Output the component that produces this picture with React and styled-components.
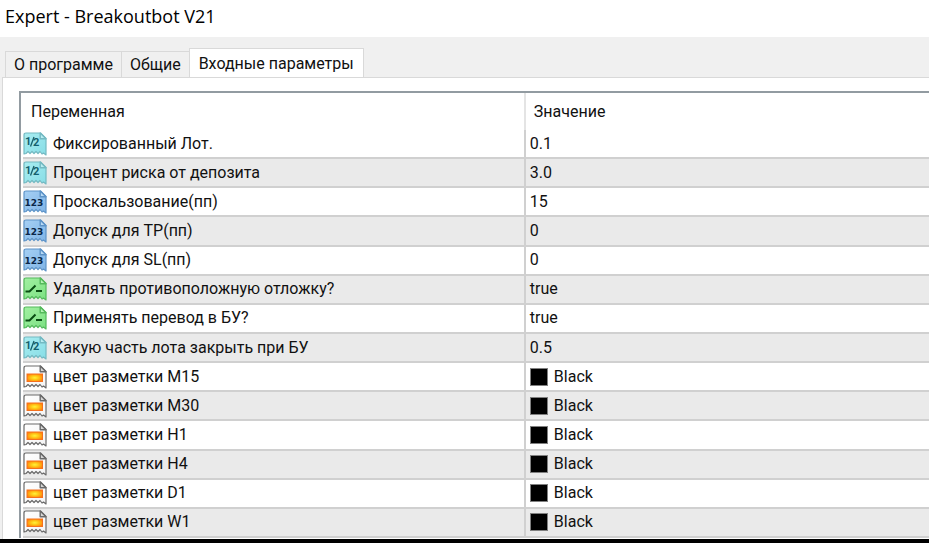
import React, { useState } from 'react';
import styled, { createGlobalStyle } from 'styled-components';

const GlobalStyle = createGlobalStyle`
	* {
		box-sizing: border-box;
	}
	body {
		margin: 0;
		background: #f0f0f0;
		color: #111;
		font-family: Roboto, "Liberation Sans", sans-serif;
		font-size: 16px;
	}
`;

const Window = styled.main`
	display: flex;
	flex-direction: column;
	height: 100vh;
	overflow: hidden;
	border-bottom: 4px solid #000;
`;

const Title = styled.h1`
	flex: none;
	margin: 0;
	padding: 4px 5px 9px;
	background: #fff;
	color: #000;
	font-family: "Open Sans", "Noto Sans", sans-serif;
	font-size: 18px;
	font-weight: 400;
	line-height: 24px;
`;

const Tabs = styled.div`
	display: flex;
	flex: none;
	align-items: flex-end;
	height: 40px;
	padding-left: 5px;
`;

const Tab = styled.button`
	height: ${props => (props.$active ? 30 : 26)}px;
	margin: 0 0 ${props => (props.$active ? -1 : 0)}px;
	padding: 0 ${props => (props.$active ? 9 : 8)}px;
	border: 1px solid #d9d9d9;
	border-bottom: 0;
	border-right-width: ${props => (props.$active ? 1 : 0)}px;
	background: ${props => (props.$active ? '#fff' : '#f0f0f0')};
	color: inherit;
	font: inherit;
	line-height: 26px;
	white-space: nowrap;
`;

const Panel = styled.section`
	flex: 1;
	min-height: 0;
	margin-left: 2px;
	padding: 13px 0 1px 16px;
	border: solid #d9d9d9;
	border-width: 1px 0 0 1px;
	background: #fff;
	overflow: hidden;
`;

const Frame = styled.div`
	height: 100%;
	padding-left: 2px;
	border: solid #929ba1;
	border-width: 2px 0 0 2px;
`;

const Table = styled.table`
	width: 100%;
	height: 100%;
	border-collapse: separate;
	border-spacing: 0;
	table-layout: fixed;
`;

const HeadCell = styled.th`
	width: ${props => props.$width || 'auto'};
	height: 37px;
	padding: 0 8px;
	border-right: ${props => (props.$width ? '2px solid #e4e4e4' : '0')};
	font-weight: 400;
	text-align: left;
`;

const Row = styled.tr`
	background: #fff;
	&:nth-child(even) {
		background: #eaeaea;
	}
`;

const Cell = styled.td`
	height: 29px;
	padding: 0 4px 0 ${props => (props.$name ? 0 : 4)}px;
	border-bottom: 2px solid #d0d0d0;
	border-right: ${props => (props.$name ? '2px solid #d0d0d0' : '0')};
	line-height: 20px;
	white-space: nowrap;
`;

const Entry = styled.div`
	display: flex;
	align-items: center;
	gap: 6px;
	height: 27px;
`;

const Swatch = styled.span`
	width: 18px;
	height: 18px;
	border: 1px solid #808080;
	background: ${props => props.$color};
`;

const Icon = styled.svg`
	flex: none;
	width: 24px;
	height: 24px;
`;

const looks = {
	double: { fill: '#86dde6', light: '#a9edf1', edge: '#74b9c2', fold: '#b8eef2', ink: '#14606e' },
	int: { fill: '#7fb4e6', light: '#a6d0f4', edge: '#5e94c8', fold: '#b9dbf6', ink: '#0a2748' },
	bool: { fill: '#7be182', light: '#a2f0a2', edge: '#54b95c', fold: '#b4f4b4', ink: '#094d12' },
	color: { fill: '#f4f4f4', light: '#fff', edge: '#6a6a6a', fold: '#d6d6d6', ink: '#606060' }
};

// torn sheet of paper with a folded corner, the mark inside depends on the type
const TypeIcon = ({ type }) => {
	const { fill, light, edge, fold, ink } = looks[type];
	return (
		<Icon viewBox="0 0 24 24" aria-hidden="true">
			<defs>
				<linearGradient id={`sheet-${type}`} x1="0" y1="0" x2="1" y2="1">
					<stop offset="0" stopColor={light} />
					<stop offset="1" stopColor={fill} />
				</linearGradient>
				<radialGradient id="glow" cx="0.5" cy="0.5" r="0.6">
					<stop offset="0" stopColor="#fff23a" />
					<stop offset="0.45" stopColor="#ffc414" />
					<stop offset="1" stopColor="#ff7a0c" />
				</radialGradient>
			</defs>
			<path
				d="M3 1H17.5L23 6.5V23L20.5 21L19 22L17 19.5L15 21.5L13 19.5L11 21.5L9 19.5L7 21.5L5 19.5L3 21.5L1 22V3Q1 1 3 1Z"
				fill={`url(#sheet-${type})`}
				stroke={edge}
				strokeWidth="1.2"
				strokeLinejoin="round"
			/>
			<path d="M17.2 1V6.8H23Z" fill={fold} stroke={edge} strokeWidth="1.4" strokeLinejoin="round" />
			{ type === 'double' &&
				<g fill={ink} fontFamily="Roboto, sans-serif" fontSize="11" fontWeight="700">
					<text x="2" y="13">1</text>
					<text x="10" y="14">2</text>
					<path d="M7.5 14.5L11 5" fill="none" stroke={ink} strokeWidth="1.3" />
				</g>
			}
			{ type === 'int' &&
				<text x="11" y="16" textAnchor="middle" fill={ink} fontSize="9" fontWeight="700" fontFamily="DejaVu Sans, sans-serif">123</text>
			}
			{ type === 'bool' &&
				<path d="M2.5 14.5H6.5L12.5 8.5M13 14H19" fill="none" stroke={ink} strokeWidth="2" />
			}
			{ type === 'color' &&
				<rect x="4" y="9" width="15.5" height="7.5" fill="url(#glow)" stroke="#f5701d" />
			}
		</Icon>
	);
};

const params = [
	{ type: 'double', name: 'Фиксированный Лот.', value: '0.1' },
	{ type: 'double', name: 'Процент риска от депозита', value: '3.0' },
	{ type: 'int', name: 'Проскальзование(пп)', value: '15' },
	{ type: 'int', name: 'Допуск для TP(пп)', value: '0' },
	{ type: 'int', name: 'Допуск для SL(пп)', value: '0' },
	{ type: 'bool', name: 'Удалять противоположную отложку?', value: 'true' },
	{ type: 'bool', name: 'Применять перевод в БУ?', value: 'true' },
	{ type: 'double', name: 'Какую часть лота закрыть при БУ', value: '0.5' },
	{ type: 'color', name: 'цвет разметки M15', value: 'Black' },
	{ type: 'color', name: 'цвет разметки M30', value: 'Black' },
	{ type: 'color', name: 'цвет разметки H1', value: 'Black' },
	{ type: 'color', name: 'цвет разметки H4', value: 'Black' },
	{ type: 'color', name: 'цвет разметки D1', value: 'Black' },
	{ type: 'color', name: 'цвет разметки W1', value: 'Black' }
];

const tabs = ['О программе', 'Общие', 'Входные параметры'];

const App = () => {
	const [active, setActive] = useState(2);

	return (
		<Window>
			<GlobalStyle />
			<Title>Expert - Breakoutbot V21</Title>
			<Tabs role="tablist">
				{ tabs.map((tab, i) => (
					<Tab
						key={tab}
						type="button"
						role="tab"
						aria-selected={i === active}
						$active={i === active}
						onClick={() => setActive(i)}
					>
						{tab}
					</Tab>
				)) }
			</Tabs>
			<Panel role="tabpanel" aria-label={tabs[active]}>
				{ active === 2 &&
					<Frame>
						<Table>
							<thead>
								<tr>
									<HeadCell scope="col" $width="55.5%">Переменная</HeadCell>
									<HeadCell scope="col">Значение</HeadCell>
								</tr>
							</thead>
							<tbody>
								{ params.map(({ type, name, value }) => (
									<Row key={name}>
										<Cell $name>
											<Entry>
												<TypeIcon type={type} />
												{name}
											</Entry>
										</Cell>
										<Cell>
											<Entry>
												{ type === 'color' && <Swatch $color={value.toLowerCase()} /> }
												{value}
											</Entry>
										</Cell>
									</Row>
								)) }
							</tbody>
						</Table>
					</Frame>
				}
			</Panel>
		</Window>
	);
};

export default App;
